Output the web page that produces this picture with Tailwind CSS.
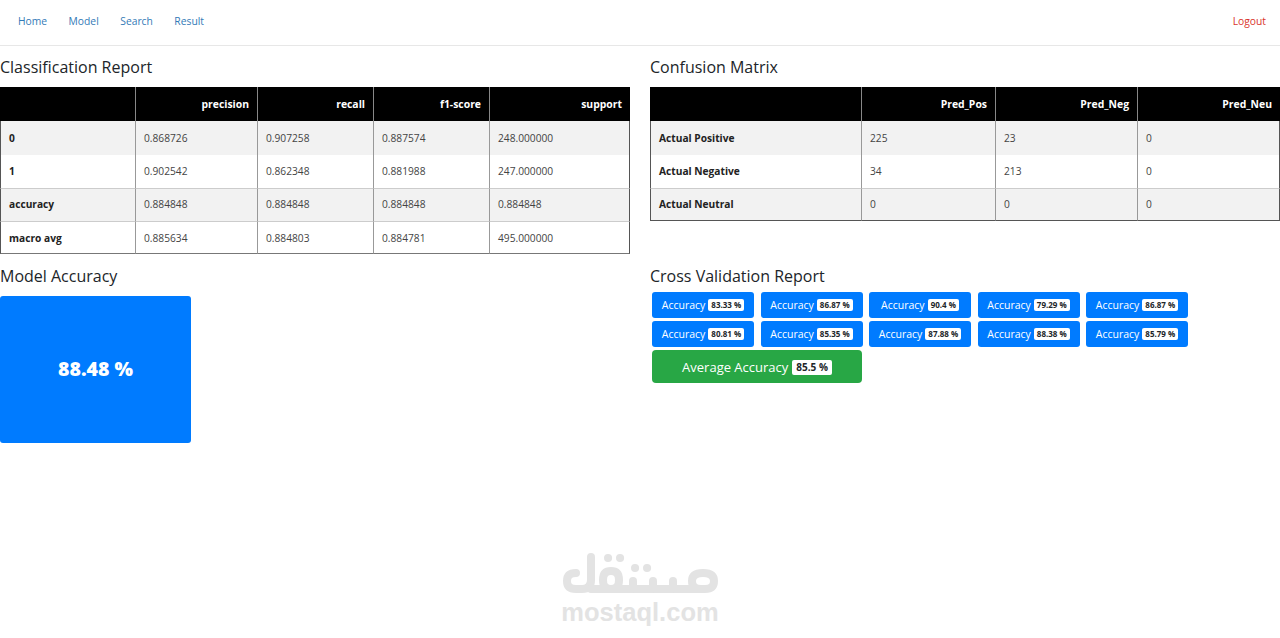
<!DOCTYPE html>
<html><head><meta charset="utf-8"><script src="https://cdn.jsdelivr.net/npm/@tailwindcss/browser@4"></script></head>
<body class="bg-white h-[638px] overflow-hidden relative font-['Open_Sans','Noto_Sans',sans-serif] text-[#212529]">
<nav class="h-[46px] border-b border-[#e7e7e7] flex items-center justify-between px-[18px] pb-[2px] text-[10.3px]">
  <div class="flex gap-[21.5px] text-[#337ab7]"><span>Home</span><span>Model</span><span>Search</span><span>Result</span></div>
  <span class="text-[#d9342b] mr-[-4px]">Logout</span>
</nav>
<main class="grid grid-cols-[630px_630px] gap-x-5">
  <section>
    <h2 class="text-[16px] leading-[20px] font-medium mt-[11px] mb-[10px]">Classification Report</h2>
    <table class="w-[630px] table-fixed border-separate border-spacing-0 text-[10.2px] text-[#444]">
      <colgroup><col class="w-[135px]"><col class="w-[122px]"><col class="w-[116px]"><col class="w-[116px]"><col class="w-[141px]"></colgroup>
      <thead class="bg-black text-white font-bold"><tr class="h-[34px] text-[10.4px]"><th></th><th class="pr-2 pt-[1px] border-l border-[#888] text-right">precision</th><th class="pr-2 pt-[1px] border-l border-[#888] text-right">recall</th><th class="pr-2 pt-[1px] border-l border-[#888] text-right">f1-score</th><th class="pr-2 pt-[1px] border-l border-[#888] text-right">support</th></tr></thead>
      <tbody>
        <tr class="h-[34px] bg-[#f2f2f2]"><th class="text-left pl-2 pt-[1px] text-[#222] border-l border-[#555]">0</th><td class="pl-2 pt-[1px] border-l border-[#999]">0.868726</td><td class="pl-2 pt-[1px] border-l border-[#999]">0.907258</td><td class="pl-2 pt-[1px] border-l border-[#999]">0.887574</td><td class="pl-2 pt-[1px] border-l border-r border-l-[#999] border-r-[#555]">248.000000</td></tr>
        <tr class="h-[33px]"><th class="text-left pl-2 pt-[1px] text-[#222] border-l border-[#555]">1</th><td class="pl-2 pt-[1px] border-l border-[#999]">0.902542</td><td class="pl-2 pt-[1px] border-l border-[#999]">0.862348</td><td class="pl-2 pt-[1px] border-l border-[#999]">0.881988</td><td class="pl-2 pt-[1px] border-l border-r border-l-[#999] border-r-[#555]">247.000000</td></tr>
        <tr class="h-[33px] bg-[#f2f2f2]"><th class="text-left pl-2 text-[#222] border-l border-t border-l-[#555] border-t-[#ccc]">accuracy</th><td class="pl-2 border-l border-t border-l-[#999] border-t-[#ccc]">0.884848</td><td class="pl-2 border-l border-t border-l-[#999] border-t-[#ccc]">0.884848</td><td class="pl-2 border-l border-t border-l-[#999] border-t-[#ccc]">0.884848</td><td class="pl-2 border-l border-r border-t border-l-[#999] border-r-[#555] border-t-[#ccc]">0.884848</td></tr>
        <tr class="h-[33px]"><th class="text-left pl-2 pt-[3px] text-[#222] border-l border-t border-b border-l-[#555] border-t-[#ccc] border-b-[#777]">macro avg</th><td class="pl-2 pt-[3px] border-l border-t border-b border-l-[#999] border-t-[#ccc] border-b-[#777]">0.885634</td><td class="pl-2 pt-[3px] border-l border-t border-b border-l-[#999] border-t-[#ccc] border-b-[#777]">0.884803</td><td class="pl-2 pt-[3px] border-l border-t border-b border-l-[#999] border-t-[#ccc] border-b-[#777]">0.884781</td><td class="pl-2 pt-[3px] border-l border-r border-t border-b border-l-[#999] border-r-[#555] border-t-[#ccc] border-b-[#777]">495.000000</td></tr>
      </tbody>
    </table>
  </section>
  <section>
    <h2 class="text-[16px] leading-[20px] font-medium mt-[11px] mb-[10px]">Confusion Matrix</h2>
    <table class="w-[630px] table-fixed border-separate border-spacing-0 text-[10.2px] text-[#444]">
      <colgroup><col class="w-[211px]"><col class="w-[134px]"><col class="w-[142px]"><col class="w-[143px]"></colgroup>
      <thead class="bg-black text-white font-bold"><tr class="h-[34px] text-[10.4px]"><th></th><th class="pr-2 pt-[1px] border-l border-[#888] text-right">Pred_Pos</th><th class="pr-2 pt-[1px] border-l border-[#888] text-right">Pred_Neg</th><th class="pr-2 pt-[1px] border-l border-[#888] text-right">Pred_Neu</th></tr></thead>
      <tbody>
        <tr class="h-[34px] bg-[#f2f2f2]"><th class="text-left pl-2 pt-[1px] text-[#222] border-l border-[#555]">Actual Positive</th><td class="pl-2 pt-[1px] border-l border-[#999]">225</td><td class="pl-2 pt-[1px] border-l border-[#999]">23</td><td class="pl-2 pt-[1px] border-l border-r border-l-[#999] border-r-[#555]">0</td></tr>
        <tr class="h-[33px]"><th class="text-left pl-2 pt-[1px] text-[#222] border-l border-[#555]">Actual Negative</th><td class="pl-2 pt-[1px] border-l border-[#999]">34</td><td class="pl-2 pt-[1px] border-l border-[#999]">213</td><td class="pl-2 pt-[1px] border-l border-r border-l-[#999] border-r-[#555]">0</td></tr>
        <tr class="h-[33px] bg-[#f2f2f2]"><th class="text-left pl-2 text-[#222] border-l border-t border-b border-l-[#555] border-t-[#ccc] border-b-[#555]">Actual Neutral</th><td class="pl-2 border-l border-t border-b border-l-[#999] border-t-[#ccc] border-b-[#555]">0</td><td class="pl-2 border-l border-t border-b border-l-[#999] border-t-[#ccc] border-b-[#555]">0</td><td class="pl-2 border-l border-r border-t border-b border-l-[#999] border-r-[#555] border-t-[#ccc] border-b-[#555]">0</td></tr>
      </tbody>
    </table>
  </section>
  <section>
    <h2 class="text-[16px] leading-[20px] font-medium mt-[12px] mb-[10px]">Model Accuracy</h2>
    <div class="w-[191px] h-[147px] pb-[2px] bg-[#007bff] rounded-[3px] flex items-center justify-center text-white font-extrabold text-[19.5px]">88.48 %</div>
  </section>
  <section>
    <h2 class="text-[16px] leading-[20px] font-medium mt-[12px] mb-[6px]">Cross Validation Report</h2>
    <div class="pl-[2px] flex flex-col gap-[3px]">
      <div class="flex gap-[6.5px]">
        <div class="w-[102px] h-[26px] pt-[2px] bg-[#007bff] rounded-[3px] text-white text-[10.5px] flex items-center justify-center gap-[3px]">Accuracy<span class="-mt-[2px] bg-white text-[#212529] text-[8px] font-bold rounded-[2px] px-[3px] leading-[12px]">83.33 %</span></div>
        <div class="w-[102px] h-[26px] pt-[2px] bg-[#007bff] rounded-[3px] text-white text-[10.5px] flex items-center justify-center gap-[3px]">Accuracy<span class="-mt-[2px] bg-white text-[#212529] text-[8px] font-bold rounded-[2px] px-[3px] leading-[12px]">86.87 %</span></div>
        <div class="w-[102px] h-[26px] pt-[2px] bg-[#007bff] rounded-[3px] text-white text-[10.5px] flex items-center justify-center gap-[3px]">Accuracy<span class="-mt-[2px] bg-white text-[#212529] text-[8px] font-bold rounded-[2px] px-[3px] leading-[12px]">90.4 %</span></div>
        <div class="w-[102px] h-[26px] pt-[2px] bg-[#007bff] rounded-[3px] text-white text-[10.5px] flex items-center justify-center gap-[3px]">Accuracy<span class="-mt-[2px] bg-white text-[#212529] text-[8px] font-bold rounded-[2px] px-[3px] leading-[12px]">79.29 %</span></div>
        <div class="w-[102px] h-[26px] pt-[2px] bg-[#007bff] rounded-[3px] text-white text-[10.5px] flex items-center justify-center gap-[3px]">Accuracy<span class="-mt-[2px] bg-white text-[#212529] text-[8px] font-bold rounded-[2px] px-[3px] leading-[12px]">86.87 %</span></div>
      </div>
      <div class="flex gap-[6.5px]">
        <div class="w-[102px] h-[26px] pt-[2px] bg-[#007bff] rounded-[3px] text-white text-[10.5px] flex items-center justify-center gap-[3px]">Accuracy<span class="-mt-[2px] bg-white text-[#212529] text-[8px] font-bold rounded-[2px] px-[3px] leading-[12px]">80.81 %</span></div>
        <div class="w-[102px] h-[26px] pt-[2px] bg-[#007bff] rounded-[3px] text-white text-[10.5px] flex items-center justify-center gap-[3px]">Accuracy<span class="-mt-[2px] bg-white text-[#212529] text-[8px] font-bold rounded-[2px] px-[3px] leading-[12px]">85.35 %</span></div>
        <div class="w-[102px] h-[26px] pt-[2px] bg-[#007bff] rounded-[3px] text-white text-[10.5px] flex items-center justify-center gap-[3px]">Accuracy<span class="-mt-[2px] bg-white text-[#212529] text-[8px] font-bold rounded-[2px] px-[3px] leading-[12px]">87.88 %</span></div>
        <div class="w-[102px] h-[26px] pt-[2px] bg-[#007bff] rounded-[3px] text-white text-[10.5px] flex items-center justify-center gap-[3px]">Accuracy<span class="-mt-[2px] bg-white text-[#212529] text-[8px] font-bold rounded-[2px] px-[3px] leading-[12px]">88.38 %</span></div>
        <div class="w-[102px] h-[26px] pt-[2px] bg-[#007bff] rounded-[3px] text-white text-[10.5px] flex items-center justify-center gap-[3px]">Accuracy<span class="-mt-[2px] bg-white text-[#212529] text-[8px] font-bold rounded-[2px] px-[3px] leading-[12px]">85.79 %</span></div>
      </div>
      <div class="w-[210px] h-[33px] pt-[2px] bg-[#28a745] rounded-[4px] text-white text-[13px] flex items-center justify-center gap-[4px]">Average Accuracy<span class="bg-white text-[#212529] text-[10px] font-bold rounded-[2px] px-[4px] leading-[15px]">85.5 %</span></div>
    </div>
  </section>
</main>
<div class="absolute left-[555px] top-[548px] w-[170px] flex flex-col items-center text-[#e3e3e3]">
  <svg width="170" height="52" viewBox="0 0 170 52" fill="none" stroke="#e3e3e3" stroke-width="8" stroke-linecap="round" stroke-linejoin="round">
    <path d="M36 9V32Q36 41 27 41H21Q12 41 12 33Q12 25 21 25"/>
    <path d="M36 41H52M56 23Q48 23 48 32Q48 41 56 41Q64 41 64 32Q64 23 56 23ZM56 41H140"/>
    <path d="M78 41V33M98 41V33M118 41V33"/>
    <path d="M136 41H150Q159 41 159 33Q159 25 148 25Q137 25 137 33Q137 41 146 41"/>
    <path d="M53 10H53.1M65 10H65.1M80 20H80.1M92 20H92.1" stroke-width="8"/>
  </svg>
  <span class="font-['Liberation_Sans',sans-serif] font-bold text-[25.5px] leading-[24px]">mostaql.com</span>
</div>
</body></html>
